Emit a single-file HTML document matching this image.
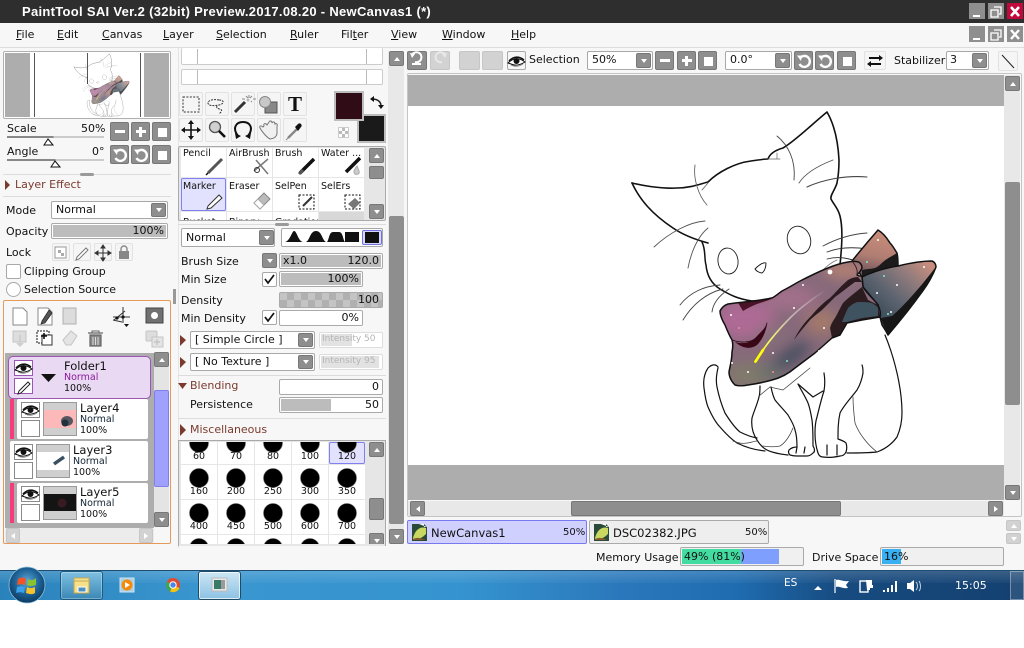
<!DOCTYPE html>
<html><head><meta charset="utf-8"><title>PaintTool SAI</title>
<style>
html,body{margin:0;padding:0}
body{position:relative;width:1024px;height:648px;overflow:hidden;background:#fff;font-family:"DejaVu Sans","Liberation Sans",sans-serif;font-size:11px;color:#111}
.a{position:absolute;box-sizing:border-box}
.t{position:absolute;white-space:nowrap;line-height:14px}
.br{color:#7a3b2e}
.s{font-size:10px}
u{text-decoration:underline}
.gb{position:absolute;box-sizing:border-box;background:#8e8e8e;border:1px solid #777;border-radius:2px}
.dis{background:#d2d2d2;border-color:#c6c6c6}
.gb::after{content:"";position:absolute;left:50%;top:50%}
.dn::after{margin:-2px 0 0 -3px;border:3px solid transparent;border-top:4px solid #fff;border-bottom:0}
.up::after{margin:-2px 0 0 -3px;border:3px solid transparent;border-bottom:4px solid #fff;border-top:0}
.lf::after{margin:-3px 0 0 -2px;border:3px solid transparent;border-right:4px solid #fff;border-left:0}
.rt::after{margin:-3px 0 0 -2px;border:3px solid transparent;border-left:4px solid #fff;border-right:0}
.st::after{margin:-4px 0 0 -4px;width:9px;height:9px;background:#fff}
.mi::after{margin:-1.5px 0 0 -5px;width:10px;height:3px;background:#fff}
.pl::after{margin:-5px 0 0 -5px;width:10px;height:10px;background:linear-gradient(#fff,#fff) center/3px 10px no-repeat,linear-gradient(#fff,#fff) center/10px 3px no-repeat}
.lb{position:absolute;box-sizing:border-box;background:#f5f5f5;border:1px solid #e2e2e2;border-radius:2px}
.cb{position:absolute;box-sizing:border-box;background:#fff;border:1px solid #a8a8a8;border-radius:2px}
.bar{position:absolute;box-sizing:border-box;background:#fff;border:1px solid #aaa;border-radius:2px;overflow:hidden;line-height:13px;text-align:right;padding-right:3px;white-space:nowrap}
.bar i{position:absolute;left:1px;top:1px;bottom:1px;background:#bcbcbc;z-index:0}
.bar span{position:relative;z-index:1}
.cell{position:absolute;box-sizing:border-box;background:#fff;overflow:hidden;font-size:9.5px;padding:0 0 0 2px;line-height:12px;white-space:nowrap}
.sz{position:absolute;width:40px;text-align:center;font-size:9.5px;line-height:12px}
.card{position:absolute;box-sizing:border-box;background:#fff;border-radius:2px}
.bx{position:absolute;box-sizing:border-box;background:#fff;border:1px solid #8a8a8a}
.th{position:absolute;box-sizing:border-box;width:34px;height:34px;background:#cfcfcf;border:1px solid #9a9a9a;overflow:hidden}
.n{font-size:9.5px}
.hr{position:absolute;height:1px;background:#dcdcdc}
.sp{position:absolute;width:14px;height:3px;background:#9a9a9a;border-radius:2px}
</style></head>
<body>
<!-- app background -->
<div class="a" style="left:0;top:23px;width:1024px;height:547px;background:#f7f7f7"></div>
<!-- title -->
<div class="a" style="left:0;top:0;width:1024px;height:23px;background:#2e2e2e"></div>
<div class="t" style="left:22px;top:5px;color:#fff;font:bold 13px/14px 'Liberation Sans',sans-serif;letter-spacing:.3px">PaintTool SAI Ver.2 (32bit) Preview.2017.08.20 - NewCanvas1 (*)</div>
<div class="a" style="left:969px;top:3px;width:16px;height:16px;background:#8f8f8f"></div>
<div class="a" style="left:988px;top:3px;width:16px;height:16px;background:#8f8f8f"></div>
<div class="a" style="left:1007px;top:3px;width:16px;height:16px;background:#c00a3c"></div>
<div class="a" style="left:969px;top:26px;width:16px;height:16px;background:#8f8f8f"></div>
<div class="a" style="left:988px;top:26px;width:16px;height:16px;background:#8f8f8f"></div>
<div class="a" style="left:1007px;top:26px;width:16px;height:16px;background:#8f8f8f"></div>
<!-- menu -->
<div class="a" style="left:0;top:47px;width:1024px;height:1px;background:#ddd"></div>
<div class="t" style="left:16px;top:28px"><u>F</u>ile</div>
<div class="t" style="left:57px;top:28px"><u>E</u>dit</div>
<div class="t" style="left:102px;top:28px"><u>C</u>anvas</div>
<div class="t" style="left:163px;top:28px"><u>L</u>ayer</div>
<div class="t" style="left:216px;top:28px"><u>S</u>election</div>
<div class="t" style="left:290px;top:28px"><u>R</u>uler</div>
<div class="t" style="left:341px;top:28px">Fil<u>t</u>er</div>
<div class="t" style="left:391px;top:28px"><u>V</u>iew</div>
<div class="t" style="left:442px;top:28px"><u>W</u>indow</div>
<div class="t" style="left:511px;top:28px"><u>H</u>elp</div>

<!-- left panel: preview -->
<div class="a" style="left:3px;top:51px;width:168px;height:68px;background:#fff;border:1px solid #b0b0b0;border-radius:2px"></div>
<div class="a" style="left:5px;top:53px;width:25px;height:64px;background:#adadad"></div>
<div class="a" style="left:144px;top:53px;width:25px;height:64px;background:#adadad"></div>
<div class="a" style="left:34px;top:53px;width:1px;height:64px;background:#555"></div>
<div class="a" style="left:87px;top:53px;width:1px;height:31px;background:#555"></div>
<div class="a" style="left:140px;top:53px;width:1px;height:64px;background:#555"></div>
<div class="t" style="left:7px;top:122px">Scale</div>
<div class="t" style="left:81px;top:122px">50%</div>
<div class="a" style="left:7px;top:136px;width:97px;height:2px;background:linear-gradient(90deg,#888 48%,#ccc 48%)"></div>
<div class="gb mi" style="left:110px;top:122px;width:19px;height:19px"></div>
<div class="gb pl" style="left:131px;top:122px;width:19px;height:19px"></div>
<div class="gb st" style="left:152px;top:122px;width:19px;height:19px"></div>
<div class="t" style="left:7px;top:145px">Angle</div>
<div class="t" style="left:92px;top:145px">0°</div>
<div class="a" style="left:7px;top:159px;width:97px;height:2px;background:linear-gradient(90deg,#888 50%,#ccc 50%)"></div>
<div class="gb" style="left:110px;top:145px;width:19px;height:19px"></div>
<div class="gb" style="left:131px;top:145px;width:19px;height:19px"></div>
<div class="gb st" style="left:152px;top:145px;width:19px;height:19px"></div>
<div class="hr" style="left:3px;top:174px;width:168px"></div>
<div class="sp" style="left:80px;top:173px"></div>
<div class="t br" style="left:15px;top:178px">Layer Effect</div>
<div class="hr" style="left:3px;top:196px;width:168px"></div>
<div class="t" style="left:6px;top:204px">Mode</div>
<div class="cb" style="left:51px;top:201px;width:117px;height:18px"></div>
<div class="t" style="left:56px;top:203px">Normal</div>
<div class="gb dn" style="left:151px;top:203px;width:15px;height:14px"></div>
<div class="t" style="left:6px;top:225px">Opacity</div>
<div class="bar" style="left:51px;top:223px;width:117px;height:16px"><i style="right:1px"></i><span>100%</span></div>
<div class="t" style="left:6px;top:246px">Lock</div>
<div class="lb" style="left:52px;top:243px;width:18px;height:18px"></div>
<div class="lb" style="left:73px;top:243px;width:18px;height:18px"></div>
<div class="lb" style="left:94px;top:243px;width:18px;height:18px"></div>
<div class="lb" style="left:115px;top:243px;width:18px;height:18px"></div>
<div class="cb" style="left:6px;top:264px;width:15px;height:15px"></div>
<div class="t" style="left:24px;top:265px">Clipping Group</div>
<div class="cb" style="left:6px;top:282px;width:15px;height:15px;border-radius:50%"></div>
<div class="t" style="left:24px;top:283px">Selection Source</div>
<div class="a" style="left:173px;top:289px;width:3px;height:15px;background:#999"></div>

<!-- layer panel -->
<div class="a" style="left:3px;top:300px;width:168px;height:244px;border:1px solid #e59a5a;border-radius:2px;background:#f7f7f7"></div>
<div class="a" style="left:5px;top:353px;width:149px;height:177px;background:#adadad"></div>
<div class="a" style="left:8px;top:356px;width:143px;height:43px;background:#e9d9f2;border:1px solid #9a55b5;border-radius:5px"></div>
<div class="bx" style="left:14px;top:360px;width:19px;height:16px;border-color:#9a55b5"></div>
<div class="bx" style="left:14px;top:378px;width:19px;height:16px;border-color:#9a55b5"></div>
<div class="t" style="left:64px;top:359px;font-size:11.5px">Folder1</div>
<div class="t n" style="left:64px;top:371px;color:#8a1a9a">Normal</div>
<div class="t n" style="left:64px;top:382px">100%</div>
<div class="a" style="left:10px;top:399px;width:4px;height:40px;background:#f83b7c"></div>
<div class="card" style="left:17px;top:399px;width:131px;height:40px"></div>
<div class="bx" style="left:21px;top:402px;width:19px;height:16px"></div>
<div class="bx" style="left:21px;top:420px;width:19px;height:17px"></div>
<div class="th" style="left:43px;top:402px"><div class="a" style="left:0;top:7px;width:32px;height:18px;background:#fcb9b9"></div></div>
<div class="t" style="left:80px;top:401px;font-size:11.5px">Layer4</div>
<div class="t n" style="left:80px;top:413px;color:#123">Normal</div>
<div class="t n" style="left:80px;top:424px">100%</div>
<div class="card" style="left:10px;top:441px;width:138px;height:40px"></div>
<div class="bx" style="left:14px;top:444px;width:19px;height:16px"></div>
<div class="bx" style="left:14px;top:462px;width:19px;height:17px"></div>
<div class="th" style="left:36px;top:444px"><div class="a" style="left:0;top:7px;width:32px;height:18px;background:#fff"></div></div>
<div class="t" style="left:73px;top:443px;font-size:11.5px">Layer3</div>
<div class="t n" style="left:73px;top:455px;color:#123">Normal</div>
<div class="t n" style="left:73px;top:466px">100%</div>
<div class="a" style="left:10px;top:483px;width:4px;height:40px;background:#f83b7c"></div>
<div class="card" style="left:17px;top:483px;width:131px;height:40px"></div>
<div class="bx" style="left:21px;top:486px;width:19px;height:16px"></div>
<div class="bx" style="left:21px;top:504px;width:19px;height:17px"></div>
<div class="th" style="left:43px;top:486px"><div class="a" style="left:0;top:7px;width:32px;height:17px;background:#141414"></div></div>
<div class="t" style="left:80px;top:485px;font-size:11.5px">Layer5</div>
<div class="t n" style="left:80px;top:497px;color:#123">Normal</div>
<div class="t n" style="left:80px;top:508px">100%</div>
<div class="a" style="left:154px;top:352px;width:15px;height:175px;background:#e4e4e4"></div>
<div class="gb up" style="left:154px;top:352px;width:15px;height:15px"></div>
<div class="a" style="left:154px;top:390px;width:15px;height:97px;background:#a0a0ff;border:1px solid #8080e8;border-radius:2px"></div>
<div class="gb dn" style="left:154px;top:512px;width:15px;height:15px"></div>
<div class="a" style="left:5px;top:528px;width:149px;height:15px;background:#ececec"></div>
<div class="gb dis lf" style="left:6px;top:528px;width:14px;height:15px"></div>
<div class="gb dis rt" style="left:139px;top:528px;width:14px;height:15px"></div>

<!-- middle panel -->
<div class="a" style="left:178px;top:48px;width:1px;height:500px;background:#e4e4e4"></div>
<div class="a" style="left:181px;top:48px;width:202px;height:17px;background:#fff;border:1px solid #ccc;border-top:0;border-radius:2px"></div>
<div class="a" style="left:181px;top:69px;width:202px;height:16px;background:#fff;border:1px solid #ccc;border-radius:2px"></div>
<div class="a" style="left:197px;top:49px;width:1px;height:15px;background:#bbb"></div>
<div class="a" style="left:366px;top:49px;width:1px;height:15px;background:#bbb"></div>
<div class="a" style="left:197px;top:70px;width:1px;height:14px;background:#bbb"></div>
<div class="a" style="left:366px;top:70px;width:1px;height:14px;background:#bbb"></div>
<div class="lb" style="left:179px;top:92px;width:24px;height:24px"></div>
<div class="lb" style="left:205px;top:92px;width:24px;height:24px"></div>
<div class="lb" style="left:231px;top:92px;width:24px;height:24px"></div>
<div class="lb" style="left:257px;top:92px;width:24px;height:24px"></div>
<div class="lb" style="left:283px;top:92px;width:24px;height:24px"></div>
<div class="t" style="left:284px;top:95px;width:22px;text-align:center;font:bold 21px/19px 'Liberation Serif',serif">T</div>
<div class="lb" style="left:179px;top:118px;width:24px;height:24px"></div>
<div class="lb" style="left:205px;top:118px;width:24px;height:24px"></div>
<div class="lb" style="left:231px;top:118px;width:24px;height:24px"></div>
<div class="lb" style="left:257px;top:118px;width:24px;height:24px"></div>
<div class="lb" style="left:283px;top:118px;width:24px;height:24px"></div>
<div class="a" style="left:357px;top:114px;width:29px;height:29px;background:#1a1a1a;border:2px solid #bdbdbd"></div>
<div class="a" style="left:334px;top:91px;width:30px;height:30px;background:#300c17;border:2px solid #bdbdbd"></div>
<div class="a" style="left:338px;top:127px;width:11px;height:11px;background:#fff;border:1px solid #ccc;background-image:linear-gradient(45deg,#bbb 25%,transparent 25%,transparent 75%,#bbb 75%),linear-gradient(45deg,#bbb 25%,transparent 25%,transparent 75%,#bbb 75%);background-size:6px 6px;background-position:0 0,3px 3px"></div>

<!-- brush grid -->
<div class="a" style="left:178px;top:146px;width:208px;height:75px;background:#e6e6e6;border:1px solid #aaa;border-radius:2px"></div>
<div class="a" style="left:319px;top:212px;width:45px;height:8px;background:#d8d8d8"></div>
<div class="cell" style="left:181px;top:148px;width:45px;height:29px">Pencil</div>
<div class="cell" style="left:227px;top:148px;width:45px;height:29px">AirBrush</div>
<div class="cell" style="left:273px;top:148px;width:45px;height:29px">Brush</div>
<div class="cell" style="left:319px;top:148px;width:45px;height:29px">Water ...</div>
<div class="cell" style="left:181px;top:178px;width:45px;height:33px;background:#e2e2ff;border:1px solid #8080f0;border-radius:2px;padding:2px 0 0 1px">Marker</div>
<div class="cell" style="left:227px;top:178px;width:45px;height:33px;padding-top:3px">Eraser</div>
<div class="cell" style="left:273px;top:178px;width:45px;height:33px;padding-top:3px">SelPen</div>
<div class="cell" style="left:319px;top:178px;width:45px;height:33px;padding-top:3px">SelErs</div>
<div class="cell" style="left:181px;top:212px;width:45px;height:8px;padding-top:5px">Bucket</div>
<div class="cell" style="left:227px;top:212px;width:45px;height:8px;padding-top:5px">Binary</div>
<div class="cell" style="left:273px;top:212px;width:45px;height:8px;padding-top:5px">Gradation</div>
<div class="gb up" style="left:369px;top:148px;width:15px;height:15px"></div>
<div class="gb" style="left:369px;top:166px;width:15px;height:13px"></div>
<div class="gb dn" style="left:369px;top:204px;width:15px;height:15px"></div>
<div class="hr" style="left:178px;top:224px;width:208px"></div>
<div class="sp" style="left:275px;top:223px"></div>

<!-- brush settings -->
<div class="cb" style="left:181px;top:228px;width:94px;height:19px"></div>
<div class="t" style="left:186px;top:231px">Normal</div>
<div class="gb dn" style="left:259px;top:230px;width:15px;height:15px"></div>
<div class="cb" style="left:281px;top:228px;width:102px;height:19px"></div>
<div class="a" style="left:362px;top:230px;width:20px;height:15px;background:#d8d8ff;border:1px solid #7070e0;border-radius:2px"></div>
<div class="a" style="left:365px;top:232px;width:14px;height:11px;background:#111"></div>
<div class="t" style="left:181px;top:255px">Brush Size</div>
<div class="gb dn" style="left:262px;top:253px;width:15px;height:15px"></div>
<div class="bar" style="left:279px;top:253px;width:104px;height:16px"><i style="right:1px"></i><span style="position:absolute;left:3px;z-index:1">x1.0</span><span>120.0</span></div>
<div class="t" style="left:181px;top:273px">Min Size</div>
<div class="cb" style="left:262px;top:272px;width:15px;height:15px"></div>
<div class="bar" style="left:279px;top:271px;width:84px;height:16px"><i style="right:1px"></i><span>100%</span></div>
<div class="t" style="left:181px;top:294px">Density</div>
<div class="bar" style="left:279px;top:292px;width:104px;height:16px;background-color:#c4c4c4;background-image:linear-gradient(45deg,#b0b0b0 25%,transparent 25%,transparent 75%,#b0b0b0 75%),linear-gradient(45deg,#b0b0b0 25%,transparent 25%,transparent 75%,#b0b0b0 75%);background-size:14px 14px;background-position:0 0,7px 7px"><span>100</span></div>
<div class="t" style="left:181px;top:312px">Min Density</div>
<div class="cb" style="left:262px;top:310px;width:15px;height:15px"></div>
<div class="bar" style="left:279px;top:310px;width:84px;height:16px"><span>0%</span></div>
<div class="cb" style="left:190px;top:331px;width:125px;height:18px"></div>
<div class="t" style="left:195px;top:333px">[ Simple Circle ]</div>
<div class="gb dn" style="left:298px;top:333px;width:15px;height:14px"></div>
<div class="bar" style="left:319px;top:332px;width:64px;height:16px;border-color:#ddd;color:#b4b4b4;font-size:9px;text-align:left;padding-left:2px;padding-right:0"><i style="width:31px;background:#e2e2e2"></i><span>Intensity 50</span></div>
<div class="cb" style="left:190px;top:353px;width:125px;height:18px"></div>
<div class="t" style="left:195px;top:355px">[ No Texture ]</div>
<div class="gb dn" style="left:298px;top:355px;width:15px;height:14px"></div>
<div class="bar" style="left:319px;top:354px;width:64px;height:16px;border-color:#ddd;color:#b4b4b4;font-size:9px;text-align:left;padding-left:2px;padding-right:0"><i style="width:58px;background:#e2e2e2"></i><span>Intensity 95</span></div>
<div class="hr" style="left:178px;top:375px;width:208px"></div>
<div class="t br" style="left:190px;top:379px">Blending</div>
<div class="bar" style="left:279px;top:379px;width:104px;height:16px"><span>0</span></div>
<div class="t" style="left:190px;top:398px">Persistence</div>
<div class="bar" style="left:279px;top:397px;width:104px;height:16px"><i style="width:50px"></i><span>50</span></div>
<div class="hr" style="left:178px;top:418px;width:208px"></div>
<div class="t br" style="left:190px;top:423px">Miscellaneous</div>

<!-- size grid -->
<div class="a" style="left:178px;top:440px;width:208px;height:106px;background:#e6e6e6;border:1px solid #aaa;border-bottom:0"></div>
<div class="a" style="left:181px;top:442px;width:184px;height:102px;overflow:hidden;background:#e6e6e6">
 <div class="a" style="left:0;top:0;width:36px;height:22px;background:#fff"></div><div class="a" style="left:37px;top:0;width:36px;height:22px;background:#fff"></div><div class="a" style="left:74px;top:0;width:36px;height:22px;background:#fff"></div><div class="a" style="left:111px;top:0;width:36px;height:22px;background:#fff"></div>
 <div class="a" style="left:148px;top:0;width:36px;height:22px;background:#e2e2ff;border:1px solid #8080f0;border-radius:2px"></div>
 <div class="a" style="left:0;top:23px;width:36px;height:34px;background:#fff"></div><div class="a" style="left:37px;top:23px;width:36px;height:34px;background:#fff"></div><div class="a" style="left:74px;top:23px;width:36px;height:34px;background:#fff"></div><div class="a" style="left:111px;top:23px;width:36px;height:34px;background:#fff"></div><div class="a" style="left:148px;top:23px;width:36px;height:34px;background:#fff"></div>
 <div class="a" style="left:0;top:58px;width:36px;height:34px;background:#fff"></div><div class="a" style="left:37px;top:58px;width:36px;height:34px;background:#fff"></div><div class="a" style="left:74px;top:58px;width:36px;height:34px;background:#fff"></div><div class="a" style="left:111px;top:58px;width:36px;height:34px;background:#fff"></div><div class="a" style="left:148px;top:58px;width:36px;height:34px;background:#fff"></div>
 <div class="a" style="left:0;top:93px;width:36px;height:9px;background:#fff"></div><div class="a" style="left:37px;top:93px;width:36px;height:9px;background:#fff"></div><div class="a" style="left:74px;top:93px;width:36px;height:9px;background:#fff"></div><div class="a" style="left:111px;top:93px;width:36px;height:9px;background:#fff"></div><div class="a" style="left:148px;top:93px;width:36px;height:9px;background:#fff"></div>
</div>
<div class="sz" style="left:179px;top:451px">60</div><div class="sz" style="left:216px;top:451px">70</div><div class="sz" style="left:253px;top:451px">80</div><div class="sz" style="left:290px;top:451px">100</div><div class="sz" style="left:327px;top:451px">120</div>
<div class="sz" style="left:179px;top:486px">160</div><div class="sz" style="left:216px;top:486px">200</div><div class="sz" style="left:253px;top:486px">250</div><div class="sz" style="left:290px;top:486px">300</div><div class="sz" style="left:327px;top:486px">350</div>
<div class="sz" style="left:179px;top:521px">400</div><div class="sz" style="left:216px;top:521px">450</div><div class="sz" style="left:253px;top:521px">500</div><div class="sz" style="left:290px;top:521px">600</div><div class="sz" style="left:327px;top:521px">700</div>
<div class="a" style="left:369px;top:442px;width:15px;height:102px;background:#e6e6e6"></div>
<div class="gb up" style="left:369px;top:442px;width:15px;height:15px"></div>
<div class="gb" style="left:369px;top:498px;width:15px;height:22px"></div>
<div class="a" style="left:369px;top:533px;width:15px;height:11px;overflow:hidden"><div class="gb dn" style="left:0;top:0;width:15px;height:15px"></div></div>

<!-- middle scrollbar -->
<div class="a" style="left:388px;top:51px;width:16px;height:493px;background:#e8e8e8"></div>
<div class="gb up" style="left:389px;top:51px;width:15px;height:15px"></div>
<div class="a" style="left:389px;top:216px;width:15px;height:308px;background:#8e8e8e;border-radius:2px"></div>
<div class="gb dn" style="left:389px;top:529px;width:15px;height:15px"></div>

<!-- toolbar -->
<div class="gb" style="left:407px;top:51px;width:20px;height:19px"></div>
<div class="gb dis" style="left:430px;top:51px;width:20px;height:19px"></div>
<div class="gb dis" style="left:459px;top:51px;width:21px;height:19px"></div>
<div class="gb dis" style="left:482px;top:51px;width:21px;height:19px"></div>
<div class="lb" style="left:507px;top:51px;width:19px;height:19px;border-color:#aaa"></div>
<div class="t" style="left:529px;top:53px">Selection</div>
<div class="cb" style="left:587px;top:51px;width:66px;height:19px"></div>
<div class="t" style="left:592px;top:53px">50%</div>
<div class="gb dn" style="left:636px;top:53px;width:15px;height:15px"></div>
<div class="gb mi" style="left:655px;top:51px;width:19px;height:19px"></div>
<div class="gb pl" style="left:677px;top:51px;width:19px;height:19px"></div>
<div class="gb st" style="left:698px;top:51px;width:19px;height:19px"></div>
<div class="cb" style="left:725px;top:51px;width:67px;height:19px"></div>
<div class="t" style="left:730px;top:53px">0.0°</div>
<div class="gb dn" style="left:775px;top:53px;width:15px;height:15px"></div>
<div class="gb" style="left:794px;top:51px;width:19px;height:19px"></div>
<div class="gb" style="left:815px;top:51px;width:19px;height:19px"></div>
<div class="gb st" style="left:837px;top:51px;width:19px;height:19px"></div>
<div class="lb" style="left:864px;top:51px;width:22px;height:19px"></div>
<div class="t" style="left:894px;top:54px">Stabilizer</div>
<div class="cb" style="left:946px;top:51px;width:43px;height:19px"></div>
<div class="t" style="left:950px;top:53px">3</div>
<div class="gb dn" style="left:972px;top:53px;width:15px;height:15px"></div>
<div class="lb" style="left:998px;top:51px;width:20px;height:20px"></div>

<!-- canvas -->
<div class="a" style="left:407px;top:73px;width:615px;height:444px;border:1px solid #c4c4c4;border-radius:2px"></div>
<div class="a" style="left:408px;top:75px;width:596px;height:425px;background:#adadad"></div>
<div class="a" style="left:408px;top:106px;width:596px;height:359px;background:#fff"></div>
<div class="a" style="left:1004px;top:75px;width:16px;height:425px;background:#e8e8e8"></div>
<div class="gb up" style="left:1005px;top:76px;width:15px;height:15px"></div>
<div class="a" style="left:1005px;top:182px;width:15px;height:223px;background:#8e8e8e;border-radius:2px"></div>
<div class="gb dn" style="left:1005px;top:485px;width:15px;height:15px"></div>
<div class="a" style="left:408px;top:501px;width:596px;height:15px;background:#e8e8e8"></div>
<div class="gb lf" style="left:410px;top:501px;width:15px;height:15px"></div>
<div class="a" style="left:571px;top:501px;width:270px;height:15px;background:#8e8e8e;border:1px solid #777;border-radius:2px"></div>
<div class="gb rt" style="left:988px;top:501px;width:15px;height:15px"></div>

<!-- tabs -->
<div class="a" style="left:407px;top:520px;width:180px;height:24px;background:#d0d0ff;border:1px solid #7878f0;border-radius:2px"></div>
<div class="t" style="left:431px;top:526px;font-size:11.5px">NewCanvas1</div>
<div class="t s" style="left:563px;top:526px">50%</div>
<div class="a" style="left:589px;top:520px;width:180px;height:24px;background:#eee;border:1px solid #aaa;border-radius:2px"></div>
<div class="t" style="left:613px;top:526px;font-size:11.5px">DSC02382.JPG</div>
<div class="t s" style="left:745px;top:526px">50%</div>
<div class="gb dis up" style="left:1006px;top:520px;width:15px;height:11px"></div>
<div class="gb dis dn" style="left:1006px;top:533px;width:15px;height:11px"></div>

<!-- status -->
<div class="t" style="left:596px;top:551px">Memory Usage</div>
<div class="a" style="left:680px;top:547px;width:124px;height:19px;background:#f0f0f0;border:1px solid #aaa;border-radius:2px"></div>
<div class="a" style="left:682px;top:549px;width:97px;height:15px;background:#7f9fff"></div>
<div class="a" style="left:682px;top:549px;width:59px;height:15px;background:#43dca0"></div>
<div class="t" style="left:684px;top:550px">49% (81%)</div>
<div class="t" style="left:812px;top:551px">Drive Space</div>
<div class="a" style="left:880px;top:547px;width:124px;height:19px;background:#f0f0f0;border:1px solid #aaa;border-radius:2px"></div>
<div class="a" style="left:882px;top:549px;width:19px;height:15px;background:#38b0f2"></div>
<div class="t" style="left:884px;top:550px">16%</div>

<!-- taskbar -->
<div class="a" style="left:0;top:570px;width:1024px;height:30px;background:linear-gradient(90deg,#2a82bb 0,#3a96cf 20%,#3593cf 45%,#2b79bc 60%,#1f6cb0 72%,#174b80 82%,#14406f 100%);border-top:1px solid #1d4e72"></div>
<div class="a" style="left:0;top:571px;width:1024px;height:12px;background:linear-gradient(rgba(255,255,255,.16),rgba(255,255,255,.03))"></div>
<div class="a" style="left:60px;top:571px;width:43px;height:29px;background:linear-gradient(#7fc0e2,#3a88b5);border:1px solid #1f5a80;border-radius:3px;box-shadow:inset 0 0 0 1px rgba(255,255,255,.3)"></div>
<div class="a" style="left:198px;top:571px;width:43px;height:29px;background:linear-gradient(#cce6f4,#8cc2e4);border:1px solid #1f4a66;border-radius:3px;box-shadow:inset 0 0 0 1px rgba(255,255,255,.7)"></div>
<div class="t" style="left:784px;top:576px;color:#fff;font-size:10.5px">ES</div>
<div class="t" style="left:955px;top:579px;color:#fff;font-size:11px">15:05</div>
<div class="a" style="left:1010px;top:571px;width:14px;height:29px;background:rgba(255,255,255,.1);border:1px solid rgba(255,255,255,.35)"></div>

<!-- all vector art -->
<svg class="a" style="left:0;top:0;pointer-events:none" width="1024" height="648" viewBox="0 0 1024 648">
<defs>
 <filter id="bl" x="-30%" y="-30%" width="160%" height="160%"><feGaussianBlur stdDeviation="7"/></filter>
 <linearGradient id="gEar" gradientUnits="userSpaceOnUse" x1="878" y1="232" x2="870" y2="275">
  <stop offset="0" stop-color="#c98c79"/><stop offset=".55" stop-color="#b17e73"/><stop offset="1" stop-color="#6f5560"/>
 </linearGradient>
 <linearGradient id="gBow" gradientUnits="userSpaceOnUse" x1="925" y1="262" x2="880" y2="312">
  <stop offset="0" stop-color="#c58d7d"/><stop offset=".35" stop-color="#8d7a7c"/><stop offset=".7" stop-color="#5d6470"/><stop offset="1" stop-color="#414f5d"/>
 </linearGradient>
 <radialGradient id="gOrb" cx=".5" cy=".4" r=".6">
  <stop offset="0" stop-color="#5aa8d8"/><stop offset=".6" stop-color="#1c5f92"/><stop offset="1" stop-color="#0d3a60"/>
 </radialGradient>
 <linearGradient id="gStreak" gradientUnits="userSpaceOnUse" x1="755" y1="362" x2="826" y2="290">
  <stop offset="0" stop-color="#ffff00"/><stop offset=".28" stop-color="#f6f56a"/><stop offset=".55" stop-color="#d8d6c8" stop-opacity=".75"/><stop offset="1" stop-color="#fff" stop-opacity="0"/>
 </linearGradient>
 <clipPath id="cMain"><rect x="408" y="106" width="596" height="359"/></clipPath>
 <clipPath id="cSize"><rect x="181" y="442" width="184" height="102"/></clipPath>
 <clipPath id="cThumb"><rect x="35" y="53" width="105" height="64"/></clipPath>
 <clipPath id="cScarf"><path d="M720 311C722 307 725 305 728 304C742 302 758 301 772 298C776 296 779 293 782 291C790 287 796 283 802 280C812 275 820 271 828 268C835 265 842 263 848 262C854 261 858 261 860 263C862 265 862 267 862 268C861 271 859 273 857 275C859 277 862 275 862 277L863 287C868 295 874 299 878 305C880 310 881 313 880 317L862 320L847 323L840 335L832 338L815 353L795 368C788 374 780 378 772 380C762 383 755 384 748 385C743 386 738 386 735 385C731 381 729 376 729 372C730 366 732 360 732 352C733 347 733 343 732 340C729 335 727 330 725 325C722 320 720 315 720 311Z"/></clipPath>

 <g id="eye">
  <path d="M0 7Q8-1 17 6Q9 11 3 8Z" fill="#fff" stroke="#111" stroke-width="1"/>
  <path d="M1 5Q8-2 16 4" fill="none" stroke="#111" stroke-width="1.6"/>
  <circle cx="8.5" cy="5" r="3" fill="#111"/>
  <path d="M3 9Q9 12 15 8" fill="none" stroke="#777" stroke-width=".7"/>
 </g>
 <g id="pen" fill="none" stroke="#222" stroke-width="1">
  <path d="M3 12L12 3L14 5L5 14L2 15Z" fill="#fff"/>
 </g>
 <g id="rot" fill="none" stroke="#fff" stroke-width="2.4">
  <path d="M4 5A5.5 5.5 0 1 1 3.5 11"/>
  <path d="M1 2.5L6 2.5L5 8Z" fill="#fff" stroke="none"/>
 </g>
 <g id="cat" fill="none" stroke="#111" stroke-linecap="round" stroke-linejoin="round">
  <!-- tail and body -->
  <g stroke-width="1.2">
   <path d="M718 367C716 364 712 364 708 368C704 374 703 380 704 388C705 396 706 402 708 407C712 416 716 423 720 427C726 434 731 439 737 443C745 447 755 450 765 451"/>
   <path d="M718 368C716 376 716 382 717 387C719 397 722 406 725 413C730 421 735 428 740 432C746 435 751 437 757 438"/>
   <path d="M760 386C760 390 760 394 759 397C757 405 754 411 752 418C751 426 753 434 757 440C760 445 763 448 767 450C773 453 780 454 788 455"/>
   <path d="M771 387C772 392 773 396 775 400C779 405 784 410 788 415C791 420 794 425 795 430C797 436 797 442 797 447C794 447 791 448 789 450C788 452 789 454 790 455C793 456 795 456 797 456C801 456 804 456 807 456C809 456 811 455 813 453C815 452 815 449 813 446C813 437 813 428 812 420C811 414 810 408 808 403C805 396 801 390 798 384"/>
   <path d="M797 447L796 453M805 447L804 453"/>
   <path d="M798 384L813 397L823 391"/>
   <path d="M824 373C825 379 825 385 824 391C821 400 819 409 817 417C815 423 815 428 815 433C815 440 816 447 818 453C819 456 821 457 823 457C830 458 835 457 840 456C843 456 845 454 846 452C847 449 847 446 846 443C844 441 841 440 838 439C838 430 838 422 840 413C844 405 851 398 857 390C860 385 862 379 863 373C863 370 863 367 862 365"/>
   <path d="M827 445L827 455M837 445L837 455"/>
   <path d="M847 453C857 453 867 453 877 452C885 449 892 444 897 437C900 430 902 422 902 413C902 399 900 386 897 373C894 360 890 347 885 335"/>
  </g>
  <g stroke-width=".8" stroke="#444">
   <path d="M733 441C738 443 743 444 747 443C750 443 754 441 757 441"/>
   <path d="M763 446C769 447 775 447 780 446C785 443 790 436 793 428"/>
   <path d="M759 396L770 387L783 390L810 368"/>
   <path d="M853 397C853 406 854 415 855 423C859 434 868 445 877 452"/>
  </g>
  <!-- head -->
  <path stroke-width="1.6" d="M632 183C640 185 660 189 677 188C690 188 700 184 708 182C718 172 735 163 751 161C758 160 764 159 768 159C770 153 776 150 783 148C795 141 810 126 827 112C834 124 838 141 839 160C839 170 838 178 837 183C835 190 830 195 831 199C834 205 838 208 840 216C843 228 842 245 840 265"/>
  <path stroke-width="1.6" d="M632 183C640 200 652 214 673 228C683 235 697 240 708 243"/>
  <path stroke-width="1.5" d="M702 242C706 250 704 258 706 265C707 276 712 284 720 289C730 295 738 299 752 301C760 301 765 300 772 298"/>
  <path stroke-width=".7" d="M768 159H780M777 153V159" stroke="#666"/>
  <ellipse cx="728" cy="261" rx="10" ry="13" stroke-width=".9" stroke="#222" transform="rotate(-8 728 261)"/>
  <ellipse cx="799" cy="240" rx="11.500" ry="14" stroke-width=".9" stroke="#222" transform="rotate(-18 799 240)"/>
  <path stroke-width=".9" d="M755 269C758 266 763 262 766 263C766 266 765 271 762 273C760 273 756 271 755 269Z"/>
  <!-- whiskers -->
  <g stroke-width=".9">
   <path d="M777 136C788 145 796 160 794 180" stroke="#444"/>
   <path d="M799 183C806 172 820 165 833 160" stroke="#555"/>
   <path stroke-width="1.1" d="M807 187C822 180 845 175 867 177" stroke="#444"/>
   <path d="M695 165C693 178 698 195 707 205" stroke="#666"/>
   <path d="M702 190L708 183" stroke="#666"/>
   <path d="M705 221C690 222 670 232 654 247" stroke="#555"/>
   <path d="M708 228C698 236 691 252 688 268" stroke="#555"/>
   <path d="M823 246C838 238 852 234 867 233" stroke="#444"/>
   <path d="M827 252C840 247 854 247 867 249" stroke="#333"/>
   <path d="M827 259C838 256 850 258 860 263" stroke="#333"/>
   <path d="M823 270C828 265 832 262 837 260" stroke="#777"/>
   <path d="M720 285C705 286 690 292 680 305" stroke="#444"/>
   <path d="M723 289C706 293 692 305 683 320" stroke="#444"/>
   <path d="M729 289C720 295 713 303 712 312" stroke="#444"/>
  </g>
  <!-- bow upper ear -->
  <path stroke-width="1.5" fill="url(#gEar)" d="M852 261C860 251 871 238 878 230C883 233 887 238 890 243C893 246 895 250 897 253C898 257 898 262 898 266L862 277Z"/>
  <path stroke="none" fill="#1c1a1b" d="M897 253C898 257 898 262 898 266L862 277L862 270C866 269 871 269 875 268C880 266 882 262 887 259C890 257 894 255 897 253Z"/>
  <!-- right bow -->
  <path stroke-width="1.5" fill="url(#gBow)" d="M862 277C872 272 885 268 898 266C910 263 922 261 932 261C935 262 936 265 936 267C933 275 928 284 922 292C912 306 900 321 888 335C886 331 884 328 882 325L880 317L878 305L863 287Z"/>
  <path stroke="none" fill="#171717" d="M935 268C933 275 928 284 922 292C912 306 900 321 888 334C886 330 883 325 881 318L892 316C905 305 922 285 935 268Z"/>
  <!-- main scarf -->
  <g clip-path="url(#cScarf)">
   <rect x="715" y="255" width="175" height="135" fill="#86697a"/>
   <g filter="url(#bl)" stroke="none">
    <ellipse cx="745" cy="320" rx="30" ry="20" fill="#ae6b94"/>
    <ellipse cx="790" cy="298" rx="28" ry="12" fill="#a36f8b"/>
    <ellipse cx="845" cy="270" rx="22" ry="7" fill="#be8571"/>
    <ellipse cx="822" cy="322" rx="16" ry="12" fill="#a67a69"/>
    <ellipse cx="750" cy="375" rx="26" ry="12" fill="#807c6a"/>
    <ellipse cx="790" cy="357" rx="24" ry="8" transform="rotate(-35 790 357)" fill="#45505f"/>
    <ellipse cx="770" cy="372" rx="12" ry="8" fill="#66706a"/>
    <ellipse cx="770" cy="335" rx="14" ry="10" fill="#86707c"/>
   </g>
   <path stroke="none" fill="#4a1226" d="M737 301L743 311C748 308 752 306 757 304L772 299L750 301Z"/>
   <path stroke="none" fill="#3a0716" d="M735 342C745 345 752 342 758 335C762 331 766 327 767 324C766 332 762 340 757 345C750 350 742 348 735 342Z"/>
   <path stroke="none" fill="#2b1a1f" d="M794 340C798 331 804 323 812 315C817 309 823 303 830 298C836 292 842 285 848 280C851 278 855 277 858 277L862 282L855 282C848 287 842 292 835 297C830 302 826 306 822 310C817 314 813 317 810 320C804 327 799 333 794 340Z"/>
   <path stroke="none" fill="#2b1c20" d="M830 328C831 324 833 321 835 318C838 313 840 308 843 303C849 297 856 292 862 287L868 300L878 305L880 317L862 320L847 323L840 335L832 338Z"/>
   <path stroke="none" fill="#3e5260" d="M842 322C844 317 846 312 848 308C851 305 854 303 858 302C863 302 868 302 872 303C875 305 877 306 878 308L878 316L862 318L847 322Z"/>
  </g>
  <path stroke-width="1.5" d="M720 311C722 307 725 305 728 304C742 302 758 301 772 298C776 296 779 293 782 291C790 287 796 283 802 280C812 275 820 271 828 268C835 265 842 263 848 262C854 261 858 261 860 263C862 265 862 267 862 268C861 271 859 273 857 275C859 277 862 275 862 277L863 287C868 295 874 299 878 305C880 310 881 313 880 317L862 320L847 323L840 335L832 338L815 353L795 368C788 374 780 378 772 380C762 383 755 384 748 385C743 386 738 386 735 385C731 381 729 376 729 372C730 366 732 360 732 352C733 347 733 343 732 340C729 335 727 330 725 325C722 320 720 315 720 311Z"/>
  <path stroke-width=".8" stroke="#2b0a18" d="M732 340C740 343 750 343 757 338C762 333 766 328 767 323"/>
  <path stroke-width="1" d="M852 261C856 266 858 270 857 275" stroke="#322"/>
  <!-- streak -->
  <path stroke="url(#gStreak)" stroke-width="1.6" d="M755 362C763 349 775 333 790 318C800 308 815 297 826 290"/>
  <path stroke="#ffff00" stroke-width="2.6" d="M755.500 361.500L763 350"/>
  <!-- stars -->
  <g stroke="none" fill="#fff">
   <circle cx="830" cy="272" r="2.400"/><circle cx="803" cy="285" r="1"/><circle cx="794" cy="308" r="1"/>
   <circle cx="731" cy="315" r="1"/><circle cx="773" cy="353" r="1"/><circle cx="824" cy="328" r="1"/>
   <circle cx="819" cy="351" r="1"/><circle cx="732" cy="363" r="1"/><circle cx="748" cy="372" r="1"/>
   <circle cx="878" cy="240" r="1"/><circle cx="924" cy="267" r="1"/><circle cx="897" cy="285" r="1"/>
   <circle cx="877" cy="293" r="1"/><circle cx="891" cy="312" r="1"/>
  </g>
  <g stroke="none" fill="#7fe8c4">
   <circle cx="867" cy="262" r="1"/><circle cx="884" cy="276" r="1"/><circle cx="888" cy="314" r="1"/><circle cx="787" cy="361" r="1"/>
  </g>
  <circle cx="773" cy="372" r="1" stroke="none" fill="#ef8f8f"/><circle cx="739" cy="328" r="1" stroke="none" fill="#e58f9f"/>
 </g>
</defs>

<!-- title bar buttons -->
<path d="M973 15h7v2h-7z" fill="#fff"/>
<path d="M994 7h7v7h-2M991 10h7v7h-7z" fill="none" stroke="#fff" stroke-width="1.3"/>
<path d="M1011 7l8 9M1019 7l-8 9" stroke="#fff" stroke-width="2.6"/>
<path d="M973 38h7v2h-7z" fill="#fff"/>
<path d="M994 30h7v7h-2M991 33h7v7h-7z" fill="none" stroke="#fff" stroke-width="1.3"/>
<path d="M1011 30l8 9M1019 30l-8 9" stroke="#fff" stroke-width="2.4"/>

<!-- main cat -->
<g clip-path="url(#cMain)"><use href="#cat"/></g>
<!-- preview cat -->
<g clip-path="url(#cThumb)"><g opacity=".78" transform="translate(74 54) scale(.182) translate(-632 -112)"><use href="#cat"/></g></g>

<!-- left sliders -->
<path d="M44 145L48 139L53 145Z" fill="#fff" stroke="#111"/>
<path d="M51 167L55 161L60 167Z" fill="#fff" stroke="#111"/>
<use href="#rot" x="112" y="147"/>
<use href="#rot" x="133" y="147"/>
<path d="M5 180L10 185L5 190Z" fill="#7a3b2e"/>

<!-- lock icons -->
<rect x="55" y="247" width="11" height="11" fill="#fff" stroke="#999"/>
<rect x="58" y="250" width="3" height="3" fill="#aaa"/><rect x="61" y="253" width="3" height="3" fill="#aaa"/>
<path d="M77 257L86 248L88 250L79 259L76 260Z" fill="#fff" stroke="#777"/>
<path d="M103 246V260M96 253H110M103 245l-2 3h4zM103 261l-2-3h4zM95 253l3-2v4zM111 253l-3-2v4z" stroke="#333" stroke-width="1" fill="#333"/>
<rect x="119" y="251" width="10" height="8" fill="#888"/>
<path d="M121 251v-2a3 3 0 0 1 6 0v2" fill="none" stroke="#888" stroke-width="1.4"/>

<!-- layer toolbar -->
<path d="M13 308h10l4 4v13H13z" fill="#fff" stroke="#888"/>
<path d="M38 308h10l4 4v13H38z" fill="#fff" stroke="#888"/>
<path d="M42 321L49 310L52 313L45 323L41 324Z" fill="#555" stroke="#222" stroke-width=".7"/>
<path d="M63 308h13v16H63z" fill="#dcdcdc" stroke="#b0b0b0"/>
<path d="M114 320L125 311M123 307V323M113 317H130M113 320L122 322" stroke="#333" stroke-width="1" fill="none"/>
<circle cx="117" cy="318" r="1.6" fill="#111"/><circle cx="123" cy="317" r="1.6" fill="#111"/>
<path d="M124 324h5l-2.500 3z" fill="#111"/>
<rect x="146" y="308" width="17" height="15" fill="#707070" stroke="#444"/><circle cx="154.500" cy="315.500" r="3.500" fill="#fff"/>
<rect x="13" y="331" width="13" height="11" fill="#ddd" stroke="#c4c4c4"/><path d="M19 335v8h-3l4 4 4-4h-3v-8z" fill="#cfcfcf"/>
<rect x="37" y="331" width="12" height="12" fill="#fff" stroke="#111" stroke-dasharray="2 1"/><rect x="42" y="335" width="10" height="10" fill="#fff" stroke="#333"/>
<path d="M44 333v6M41 336h6" stroke="#111" stroke-width="1.6"/>
<path d="M63 340L71 331L77 336L71 345L66 345Z" fill="#e4e4e4" stroke="#c4c4c4"/>
<path d="M88 333h15M90 335h11v11H90z" fill="#888" stroke="#666" stroke-width="1.2"/>
<path d="M93 337v8M95.500 337v8M98 337v8" stroke="#ddd"/>
<path d="M92 333v-2h7v2" fill="none" stroke="#666"/>
<rect x="146" y="331" width="11" height="10" rx="1" fill="#ddd" stroke="#c4c4c4"/><rect x="152" y="337" width="11" height="10" fill="#e4e4e4" stroke="#c4c4c4"/>
<path d="M157 339v6M154 342h6" stroke="#c4c4c4" stroke-width="1.4"/>

<!-- layer eyes & pens -->
<use href="#eye" x="15" y="363"/><use href="#pen" x="16" y="379"/>
<path d="M41 374H56L48.500 382Z" fill="#111"/>
<use href="#eye" x="22" y="405"/><use href="#eye" x="15" y="447"/><use href="#eye" x="22" y="489"/>
<ellipse cx="67" cy="421" rx="6" ry="5" fill="#3a4550" opacity=".85"/><circle cx="65" cy="423" r="3.500" fill="#20303c"/>
<path d="M54 464L64 457" stroke="#3a5060" stroke-width="3.500"/>
<circle cx="62" cy="503" r="4.500" fill="#55202c" opacity=".55"/>

<!-- tools row 1 -->
<rect x="183" y="97" width="16" height="15" fill="none" stroke="#333" stroke-dasharray="2 1.400"/>
<path d="M219 100C214 99 208 100 208 103C208 106 214 106 219 105C224 104 225 100 219 100ZM217 106C215 110 224 108 221 112L219 114" fill="none" stroke="#333" stroke-dasharray="2 1" stroke-width="1"/>
<path d="M235 112L245 102" stroke="#333" stroke-width="3"/>
<path d="M249 95v3M245 99h-3M253 99h3M246 96l2 2M252 96l-2 2M252 102l-1-1" stroke="#888"/>
<circle cx="248" cy="100" r="1.500" fill="#bbb"/>
<rect x="265" y="102" width="12" height="11" fill="#888" stroke="#555"/><circle cx="265" cy="102" r="5.500" fill="#c8c8c8" stroke="#888"/>
<!-- tools row 2 -->
<path d="M191 122V138M183 130H199" stroke="#111" stroke-width="1.6"/>
<path d="M191 120l-3 4h6zM191 140l-3-4h6zM181 130l4-3v6zM201 130l-4-3v6z" fill="#111"/>
<circle cx="215" cy="127" r="5.500" fill="#d0d0d0" stroke="#555" stroke-width="1.300"/><path d="M219 131L225 137" stroke="#111" stroke-width="2.600"/>
<path d="M238 136C232 128 236 122 243 122C250 122 254 128 248 136" fill="none" stroke="#111" stroke-width="2"/>
<path d="M235 133l6 3-5 3zM251 133l-6 3 5 3z" fill="#111"/>
<path d="M264 126C263 123 266 123 267 125L269 122C270 120 272 121 272 123C273 121 275 122 275 124C276 123 278 124 277 126V133C277 137 273 139 270 139C266 137 261 130 260 128C259 126 261 125 263 127Z" fill="#f0f0f0" stroke="#777" stroke-width="1"/>
<path d="M288 138L297 129" stroke="#888" stroke-width="2.400"/><path d="M288 138L286 140" stroke="#888"/>
<path d="M295 127L298 124C300 122 303 125 301 127L298 131Z" fill="#111"/>
<!-- swap arrows -->
<path d="M372 99C378 99 381 102 381 106" fill="none" stroke="#222" stroke-width="1.500"/>
<path d="M370 99l4-3v6zM381 109l-3-4h6z" fill="#111"/>

<!-- brush icons -->
<g fill="none">
 <path d="M208 173L222 159" stroke="#555" stroke-width="3"/><path d="M208 173L206 175" stroke="#111" stroke-width="1.500"/>
 <path d="M254 171L268 159M256 160L268 174" stroke="#777" stroke-width="1.500"/><circle cx="257" cy="170" r="2.500" stroke="#333"/>
 <path d="M300 173L314 159" stroke="#111" stroke-width="3.500"/><path d="M299 174L303 170" stroke="#555" stroke-width="3"/>
 <path d="M346 172L360 158" stroke="#111" stroke-width="3.500"/>
 <path d="M357 166C354 170 353 172 355 174C357 175 360 174 359 171Z" fill="#ccc" stroke="#aaa"/>
 <path d="M208 206L219 195L222 198L211 208L207 209Z" fill="#fff" stroke="#333"/>
 <path d="M254 203L264 193L270 199L260 209Z" fill="#bbb" stroke="#888"/><path d="M254 203L258 199L264 205L260 209Z" fill="#fff" stroke="#aaa"/>
 <rect x="299" y="195" width="15" height="14" stroke="#111" stroke-dasharray="2 1.500"/><path d="M303 206L312 197" stroke="#333" stroke-width="2"/>
 <rect x="345" y="195" width="15" height="14" stroke="#111" stroke-dasharray="2 1.500"/><path d="M348 204L355 198L360 203L354 209Z" fill="#777"/>
</g>
<!-- size grid circles -->
<g clip-path="url(#cSize)" fill="#000" stroke="#666" stroke-width=".6">
 <circle cx="199" cy="443" r="9.500"/><circle cx="236" cy="443" r="9.500"/><circle cx="273" cy="443" r="9.500"/><circle cx="310" cy="443" r="9.500"/><circle cx="347" cy="443" r="9.500"/>
 <circle cx="199" cy="478" r="9.500"/><circle cx="236" cy="478" r="9.500"/><circle cx="273" cy="478" r="9.500"/><circle cx="310" cy="478" r="9.500"/><circle cx="347" cy="478" r="9.500"/>
 <circle cx="199" cy="513" r="9.500"/><circle cx="236" cy="513" r="9.500"/><circle cx="273" cy="513" r="9.500"/><circle cx="310" cy="513" r="9.500"/><circle cx="347" cy="513" r="9.500"/>
 <circle cx="199" cy="548" r="9.500"/><circle cx="236" cy="548" r="9.500"/><circle cx="273" cy="548" r="9.500"/><circle cx="310" cy="548" r="9.500"/><circle cx="347" cy="548" r="9.500"/>
</g>
<!-- brush shapes -->
<g fill="#111">
 <path d="M285 242C290 241 292 231 294 231C297 231 298 241 303 242Z"/>
 <path d="M306 242C310 240 310 231 316 231C322 231 322 240 326 242Z"/>
 <path d="M327 242C329 240 329 232 333 232H339C343 232 343 240 345 242Z"/>
 <rect x="345" y="232" width="14" height="10"/>
</g>
<path d="M266 279L269 283L275 275" transform="translate(-1 0)" fill="none" stroke="#111" stroke-width="1.700"/>
<path d="M266 317L269 321L275 313" transform="translate(-1 0)" fill="none" stroke="#111" stroke-width="1.700"/>
<path d="M180 335L186 340L180 346ZM180 357L186 362L180 368Z" fill="#7a3b2e"/>
<path d="M178 383H187L182.500 389Z" fill="#7a3b2e"/>
<path d="M180 424L186 430L180 436Z" fill="#7a3b2e"/>

<!-- toolbar icons -->
<path d="M412 64H421M412 55A5 5 0 1 1 415 62" fill="none" stroke="#fff" stroke-width="2"/><path d="M410 53l5 1-3 4z" fill="#fff"/>
<path d="M445 55A5 5 0 1 0 442 62" fill="none" stroke="#e8e8e8" stroke-width="2"/><path d="M447 53l-5 1 3 4z" fill="#e8e8e8"/>
<use href="#eye" x="508" y="56"/>
<use href="#rot" x="796" y="53"/><use href="#rot" x="817" y="53"/>
<path d="M869 58H881M869 64H881" stroke="#111" stroke-width="2"/><path d="M879 55l4 3-4 3zM871 61l-4 3 4 3z" fill="#111"/>
<path d="M1002 55L1014 68" stroke="#222" stroke-width="1"/>

<!-- tab icons -->
<path d="M412 524h12l3 3v14h-15z" fill="#2a4a3a"/><path d="M413 538C415 530 420 526 426 528V534C422 538 418 540 413 539Z" fill="#c8d860"/><path d="M413 539C417 537 421 538 425 540H413Z" fill="#8a5a2a"/><path d="M419 524h5v3h3" fill="#fff"/>
<path d="M594 524h12l3 3v14h-15z" fill="#2a4a3a"/><path d="M595 538C597 530 602 526 608 528V534C604 538 600 540 595 539Z" fill="#c8d860"/><path d="M595 539C599 537 603 538 607 540H595Z" fill="#8a5a2a"/><path d="M601 524h5v3h3" fill="#fff"/>

<!-- taskbar: orb -->
<circle cx="27" cy="585" r="18" fill="url(#gOrb)" stroke="#8fc0dd" stroke-width=".8"/>
<path d="M18 579C21 577 24 577 26 579L25 585C22 584 20 584 17 585Z" fill="#f0552a"/>
<path d="M28 579C31 581 34 580 36 578L36 585C33 586 30 587 27 585Z" fill="#8ac232"/>
<path d="M17 587C20 586 22 586 25 587L24 593C21 592 19 592 16 593Z" fill="#3aa0e8"/>
<path d="M27 587C30 589 33 588 35 587L35 593C32 595 29 594 26 593Z" fill="#f8c22a"/>
<!-- explorer -->
<path d="M74 578h15v4H74z" fill="#f0e090" stroke="#c8a850"/><rect x="74" y="581" width="15" height="12" fill="#f7e08a" stroke="#c8a850"/><rect x="78" y="587" width="8" height="5" fill="#4a90c0" stroke="#fff"/>
<!-- media player -->
<rect x="120" y="578" width="14" height="14" fill="#a8d0e8" stroke="#cfe4f0"/><circle cx="127" cy="585" r="5.500" fill="#f58a0a"/><path d="M125 582L130 585L125 588Z" fill="#fff"/>
<!-- chrome -->
<circle cx="173" cy="585" r="7" fill="#e04a30"/><path d="M173 585L179.500 588A7 7 0 0 1 170 591.500Z" fill="#f4c20d"/><path d="M173 585L170 591.500A7 7 0 0 1 167 581.500Z" fill="#3aa757"/><circle cx="173" cy="585" r="3.200" fill="#4a86e8" stroke="#fff" stroke-width="1"/>
<!-- SAI -->
<rect x="212" y="578" width="15" height="13" fill="#e8e8e8" stroke="#bbb"/><rect x="214" y="580" width="7" height="9" fill="#3a7a6a"/><rect x="221" y="580" width="4" height="9" fill="#9a9a9a"/>
<!-- tray -->
<path d="M814 590L818 586L822 590Z" fill="#fff"/>
<path d="M835 579V593" stroke="#fff" stroke-width="1.200"/><path d="M836 580C840 579 843 582 849 581L846 585L848 588C843 589 840 586 836 587Z" fill="#fff"/>
<rect x="860" y="581" width="8" height="11" fill="none" stroke="#fff" stroke-width="1.400"/><path d="M866 580h6v5h1v3h-3v2h-3z" fill="#fff"/>
<path d="M883 592h2v-2h-2zM887 592h2v-4h-2zM891 592h2v-7h-2zM895 592h2v-11h-2z" fill="#fff"/>
<path d="M907 583h3l4-3v12l-4-3h-3z" fill="#fff"/>
<path d="M916 582C918 584 918 588 916 590M919 581C921 584 921 589 919 591" stroke="#bcd" fill="none"/>
</svg>
</body></html>
